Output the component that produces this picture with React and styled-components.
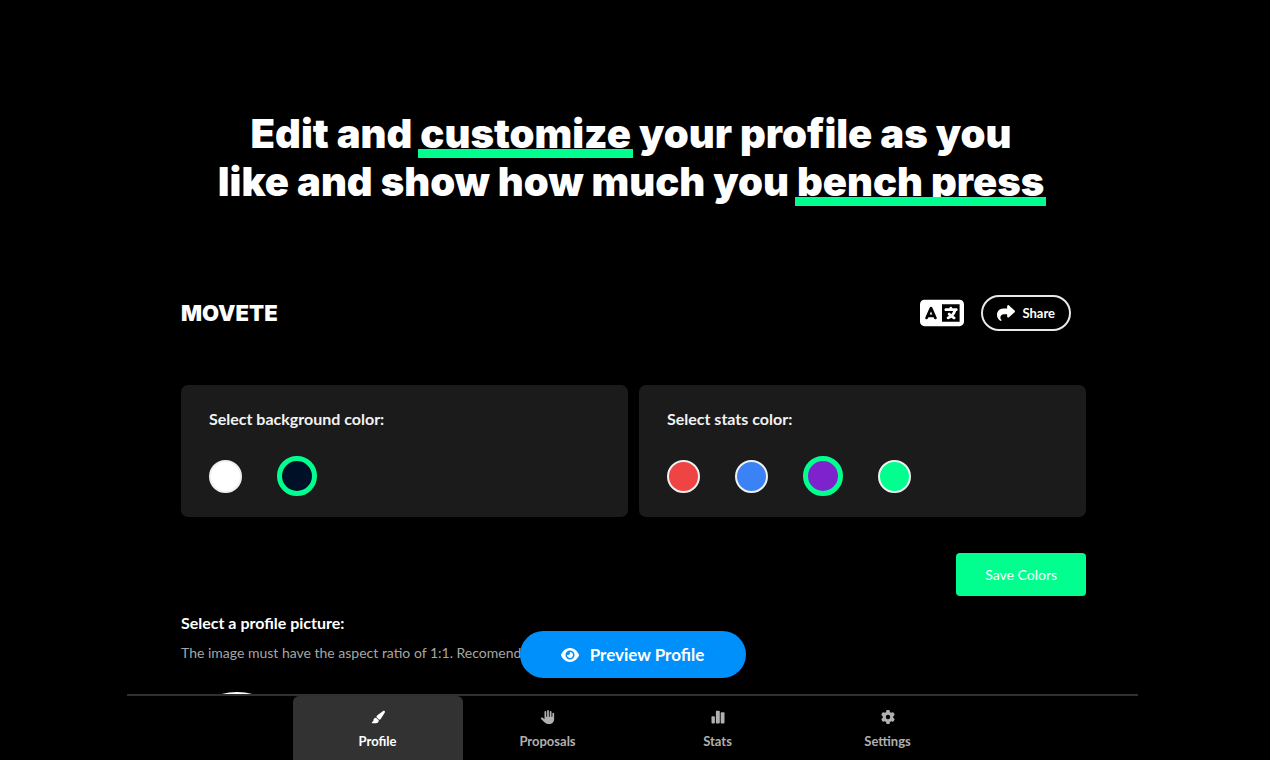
import React from "react";
import styled, { createGlobalStyle, css } from "styled-components";
import { FaEye, FaGear, FaHand, FaLanguage, FaPaintbrush, FaShare } from "react-icons/fa6";

const green = "#00ff8f";

const GlobalStyle = createGlobalStyle`
  *, *::before, *::after { box-sizing: border-box; }
  body {
    margin: 0;
    background: #000;
    color: #fff;
    font-family: Lato, "Liberation Sans", sans-serif;
  }
  button { font-family: inherit; cursor: pointer; }
`;

const Page = styled.div`
  display: flex;
  flex-direction: column;
  height: 100vh;
  overflow: hidden;
`;

const Headline = styled.h1`
  margin: 0;
  padding: 110px 16px 0 8px;
  font-family: Inter, "Liberation Sans", sans-serif;
  font-size: 40px;
  font-weight: 900;
  line-height: 48px;
  text-align: center;
`;

const Line = styled.span`
  display: block;
  white-space: nowrap;
`;

const Marked = styled.span`
  position: relative;
  display: inline-block;
  height: 48px;
  &::after {
    content: "";
    position: absolute;
    inset: auto -2px 0;
    height: 9px;
    background: ${green};
  }
`;

const AppFrame = styled.div`
  position: relative;
  flex: 1;
  min-height: 0;
  display: flex;
  flex-direction: column;
  margin: 87px 132px 0 127px;
`;

const Content = styled.main`
  flex: 1;
  min-height: 0;
  overflow: hidden;
  padding: 0 52px 0 54px;
`;

const Header = styled.header`
  display: flex;
  align-items: center;
  justify-content: space-between;
  height: 40px;
  padding-right: 15px;
`;

const Logo = styled.a`
  color: #fff;
  font-family: Inter, "Liberation Sans", sans-serif;
  font-size: 22px;
  font-weight: 900;
  text-decoration: none;
`;

const HeaderActions = styled.div`
  display: flex;
  align-items: center;
  gap: 17px;
`;

const IconButton = styled.button`
  display: flex;
  padding: 0;
  border: 0;
  background: none;
  color: #fff;
`;

const ShareButton = styled.button`
  display: flex;
  align-items: center;
  gap: 7px;
  height: 36px;
  padding: 0 14px;
  border: 2px solid #e8e8e8;
  border-radius: 18px;
  background: #000;
  color: #fff;
  font-size: 13px;
  font-weight: 700;
`;

const Cards = styled.div`
  display: grid;
  grid-template-columns: 1fr 1fr;
  gap: 11px;
  margin-top: 52px;
`;

const Card = styled.fieldset`
  min-width: 0;
  height: 132px;
  margin: 0;
  padding: 24px 28px;
  border: 0;
  border-radius: 7px;
  background: #1b1b1b;
`;

const titleText = css`
  margin: 0;
  font-size: 16px;
  font-weight: 700;
  line-height: 20px;
`;

const CardTitle = styled.legend`
  ${titleText}
  float: left;
  width: 100%;
  padding: 0;
  color: #f2f2f2;
`;

const Swatches = styled.div`
  clear: both;
  display: flex;
  align-items: center;
  gap: 35px;
  height: 40px;
  padding-top: 27px;
  box-sizing: content-box;
`;

const Swatch = styled.input`
  appearance: none;
  flex: none;
  width: 33px;
  height: 33px;
  margin: 0;
  border: 2px solid #f0f0f0;
  border-radius: 50%;
  background: ${(p) => p.$color};
  cursor: pointer;
  &:checked {
    width: 40px;
    height: 40px;
    border: 5px solid ${green};
  }
`;

const SaveRow = styled.div`
  display: flex;
  justify-content: flex-end;
  margin-top: 36px;
`;

const SaveButton = styled.button`
  height: 43px;
  padding: 0 29px;
  border: 0;
  border-radius: 4px;
  background: ${green};
  color: #fff;
  font-size: 14px;
`;

const SectionTitle = styled.h2`
  ${titleText}
  margin-top: 17px;
`;

const Hint = styled.p`
  margin: 10px 0 0;
  color: #a6a6a6;
  font-size: 14px;
  line-height: 20px;
`;

const Avatar = styled.div`
  width: 112px;
  height: 112px;
  margin-top: 29px;
  border: 4px solid #fff;
  border-radius: 50%;
`;

const PreviewButton = styled.button`
  position: absolute;
  left: 50%;
  bottom: 82px;
  transform: translateX(-50%);
  display: flex;
  align-items: center;
  justify-content: center;
  gap: 11px;
  width: 226px;
  height: 47px;
  border: 0;
  border-radius: 24px;
  background: #0090fb;
  color: #fff;
  font-size: 17px;
  font-weight: 700;
`;

const Nav = styled.nav`
  display: flex;
  justify-content: center;
  height: 66px;
  border-top: 2px solid #303030;
`;

const NavItem = styled.a`
  display: flex;
  flex-direction: column;
  align-items: center;
  gap: 8px;
  width: 170px;
  padding-top: 14px;
  border-radius: 6px 6px 0 0;
  background: ${(p) => (p.$active ? "#323232" : "transparent")};
  color: ${(p) => (p.$active ? "#fff" : "#b0b0b0")};
  font-size: 13px;
  font-weight: 700;
  line-height: 18px;
  text-decoration: none;
`;

const StatsIcon = () => (
  <svg width="14" height="14" viewBox="0 0 14 14" fill="currentColor" aria-hidden="true">
    <rect x="0.5" y="6.2" width="3.4" height="7.3" rx="1" />
    <rect x="4.9" y="0.7" width="3.9" height="12.8" rx="1" />
    <rect x="9.7" y="2.3" width="3.8" height="11.2" rx="1" />
  </svg>
);

const backgrounds = [
  { name: "White", color: "#fff" },
  { name: "Navy", color: "#001027" },
];

const stats = [
  { name: "Red", color: "#ef4444" },
  { name: "Blue", color: "#3b82f6" },
  { name: "Purple", color: "#7e22ce" },
  { name: "Green", color: green },
];

const tabs = [
  { label: "Profile", icon: <FaPaintbrush size={14} />, active: true },
  { label: "Proposals", icon: <FaHand size={14} /> },
  { label: "Stats", icon: <StatsIcon /> },
  { label: "Settings", icon: <FaGear size={14} /> },
];

function ColorCard({ title, group, colors, selected }) {
  return (
    <Card>
      <CardTitle>{title}</CardTitle>
      <Swatches>
        {colors.map(({ name, color }) => (
          <Swatch
            key={name}
            type="radio"
            name={group}
            aria-label={name}
            defaultChecked={name === selected}
            $color={color}
          />
        ))}
      </Swatches>
    </Card>
  );
}

export default function App() {
  return (
    <Page>
      <GlobalStyle />
      <Headline>
        <Line>
          Edit and <Marked>customize</Marked> your profile as you
        </Line>
        <Line>
          like and show how much you <Marked>bench press</Marked>
        </Line>
      </Headline>
      <AppFrame>
        <Content>
          <Header>
            <Logo href="#">MOVETE</Logo>
            <HeaderActions>
              <IconButton type="button" aria-label="Language">
                <FaLanguage size={44} />
              </IconButton>
              <ShareButton type="button">
                <FaShare size={18} />
                Share
              </ShareButton>
            </HeaderActions>
          </Header>
          <Cards>
            <ColorCard title="Select background color:" group="background" colors={backgrounds} selected="Navy" />
            <ColorCard title="Select stats color:" group="stats" colors={stats} selected="Purple" />
          </Cards>
          <SaveRow>
            <SaveButton type="button">Save Colors</SaveButton>
          </SaveRow>
          <SectionTitle>Select a profile picture:</SectionTitle>
          <Hint>The image must have the aspect ratio of 1:1. Recomend</Hint>
          <Avatar />
        </Content>
        <PreviewButton type="button">
          <FaEye size={18} />
          Preview Profile
        </PreviewButton>
        <Nav>
          {tabs.map(({ label, icon, active }) => (
            <NavItem key={label} href="#" $active={active}>
              {icon}
              {label}
            </NavItem>
          ))}
        </Nav>
      </AppFrame>
    </Page>
  );
}
